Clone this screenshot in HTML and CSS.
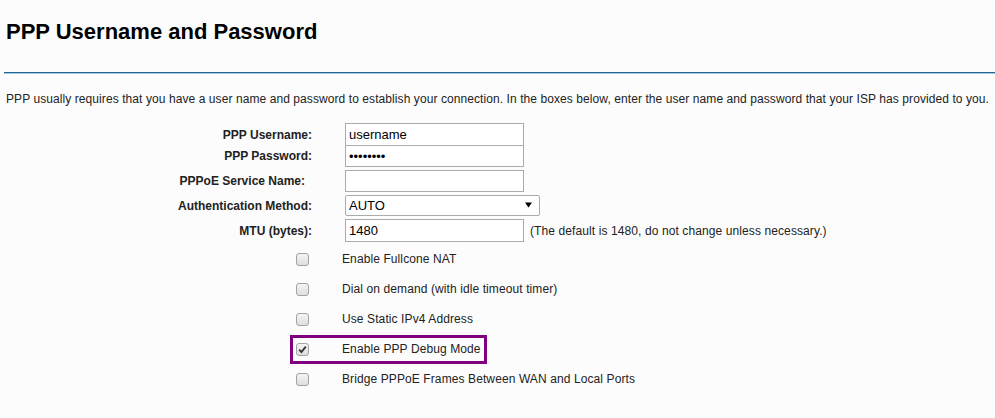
FILE: index.html
```html
<!DOCTYPE html>
<html>
<head>
<meta charset="utf-8">
<title>PPP Username and Password</title>
<link rel="stylesheet" href="styles.css">
</head>
<body>
<div class="page">
  <h1 class="title">PPP Username and Password</h1>
  <hr class="rule">
  <p class="intro">PPP usually requires that you have a user name and password to establish your connection. In the boxes below, enter the user name and password that your ISP has provided to you.</p>

  <div class="form">
    <div class="row r1">
      <label class="lbl">PPP Username:</label>
      <input class="txt" type="text" value="username">
    </div>
    <div class="row r2">
      <label class="lbl">PPP Password:</label>
      <input class="txt" type="password" value="12345678">
    </div>
    <div class="row r3">
      <label class="lbl lbl-pad">PPPoE Service Name:</label>
      <input class="txt" type="text" value="">
    </div>
    <div class="row r4">
      <label class="lbl">Authentication Method:</label>
      <div class="sel">
        <span class="sel-val">AUTO</span>
        <svg class="sel-arrow" width="7" height="6" viewBox="0 0 7 6"><path d="M0 0.5 H7 L3.5 5.5 Z" fill="#000"/></svg>
      </div>
    </div>
    <div class="row r5">
      <label class="lbl">MTU (bytes):</label>
      <input class="txt" type="text" value="1480">
      <span class="note">(The default is 1480, do not change unless necessary.)</span>
    </div>
  </div>

  <div class="checks">
    <div class="crow"><span class="cb"></span><span class="ctext">Enable Fullcone NAT</span></div>
    <div class="crow"><span class="cb"></span><span class="ctext">Dial on demand (with idle timeout timer)</span></div>
    <div class="crow"><span class="cb"></span><span class="ctext">Use Static IPv4 Address</span></div>
    <div class="crow"><div class="hl"><span class="cb"><svg class="tick" width="9" height="9" viewBox="0 0 9 9"><path d="M1.2 4.6 L3.4 7 L7.8 1.6" fill="none" stroke="#333" stroke-width="1.8"/></svg></span><span class="ctext">Enable PPP Debug Mode</span></div></div>
    <div class="crow"><span class="cb"></span><span class="ctext">Bridge PPPoE Frames Between WAN and Local Ports</span></div>
  </div>
</div>
</body>
</html>
```

FILE: styles.css
```css
html, body {
  margin: 0;
  padding: 0;
  background: #fcfcfc;
}
.page {
  font-family: "Liberation Sans", Arial, sans-serif;
  color: #222;
  width: 995px;
  height: 418px;
  overflow: hidden;
}
.title {
  margin: 19px 0 0 6px;
  font-size: 22px;
  line-height: 26px;
  font-weight: bold;
  color: #000;
}
.rule {
  margin: 27px 0 0 4px;
  border: 0;
  border-top: 1px solid #1f6596;
  height: 1px;
  background: #a8c8de;
}
.intro {
  margin: 18px 0 0 6px;
  font-size: 12px;
  line-height: 14px;
  letter-spacing: 0.08px;
  white-space: nowrap;
}
.form {
  margin-top: 17px;
}
.row {
  display: flex;
  align-items: center;
}
.lbl {
  width: 312px;
  text-align: right;
  font-size: 12px;
  font-weight: bold;
  color: #222;
  margin-right: 33px;
  box-sizing: border-box;
}
.lbl-pad {
  padding-right: 7px;
}
.txt {
  box-sizing: border-box;
  width: 179px;
  height: 22px;
  margin: 0;
  padding: 0 3px;
  border: 1px solid #ababab;
  background: #fff;
  font-family: "Liberation Sans", Arial, sans-serif;
  font-size: 13px;
  color: #000;
  outline: none;
}
.r1 .txt { height: 23px; }
.r2 { margin-top: -1px; }
.r3 { margin-top: 3px; }
.r4 { margin-top: 3px; }
.r5 { margin-top: 3px; }
.r5 .txt { height: 23px; }
.sel {
  position: relative;
  box-sizing: border-box;
  width: 195px;
  height: 21px;
  border: 1px solid #ababab;
  border-radius: 2px;
  background: #fff;
  display: flex;
  align-items: center;
  padding-left: 3px;
  font-size: 13px;
  color: #000;
}
.sel-arrow {
  position: absolute;
  right: 7px;
  top: 6px;
}
.note {
  margin-left: 6px;
  font-size: 12px;
  letter-spacing: 0.1px;
  color: #222;
}
.checks {
  margin-top: 2px;
  padding-left: 296px;
}
.crow {
  height: 30px;
  display: flex;
  align-items: center;
}
.cb {
  box-sizing: border-box;
  width: 13px;
  height: 13px;
  border: 1px solid #a3a3a3;
  border-radius: 3px;
  background: linear-gradient(#f4f4f4, #dedede);
  display: flex;
  align-items: center;
  justify-content: center;
  flex: none;
}
.ctext {
  margin-left: 33px;
  font-size: 12px;
  letter-spacing: 0.1px;
  color: #222;
  white-space: nowrap;
}
.hl {
  box-sizing: border-box;
  margin-left: -3px;
  width: 191px;
  height: 23px;
  padding-left: 3px;
  display: flex;
  align-items: center;
  outline: 3px solid #800080;
}
```
